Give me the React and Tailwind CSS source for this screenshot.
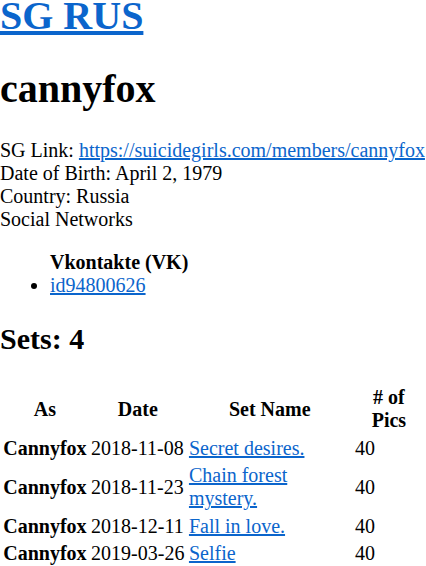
const sets = [
  { as: "Cannyfox", date: "2018-11-08", name: "Secret desires.", pics: 40 },
  { as: "Cannyfox", date: "2018-11-23", name: "Chain forest mystery.", pics: 40 },
  { as: "Cannyfox", date: "2018-12-11", name: "Fall in love.", pics: 40 },
  { as: "Cannyfox", date: "2019-03-26", name: "Selfie", pics: 40 },
];

const link = "text-[#0b65cc] underline";

export default function App() {
  return (
    <div className="bg-white text-black font-['Liberation_Serif','Times_New_Roman',serif] text-[20px] leading-[23px]">
      <h1 className="-mt-[7px] mb-[27px] text-[40px] leading-[46px] font-bold">
        <a href="#" className={link}>SG RUS</a>
      </h1>
      <h1 className="mb-[27px] text-[40px] leading-[46px] font-bold">cannyfox</h1>

      <div>
        SG Link:{" "}
        <a href="#" className={link}>https://suicidegirls.com/members/cannyfox</a>
      </div>
      <div>Date of Birth: April 2, 1979</div>
      <div>Country: Russia</div>
      <div>Social Networks</div>

      <ul className="my-[20px] pl-[50px]">
        <b className="block">Vkontakte (VK)</b>
        <li className="list-disc">
          <a href="#" className={link}>id94800626</a>
        </li>
      </ul>

      <h2 className="mt-[25px] mb-[27px] text-[30px] leading-[34px] font-bold">Sets: 4</h2>

      <table className="w-full border-separate border-spacing-[2.5px]">
        <thead>
          <tr>
            <th className="p-[1.25px] text-center font-bold">As</th>
            <th className="p-[1.25px] text-center font-bold">Date</th>
            <th className="p-[1.25px] text-center font-bold">Set Name</th>
            <th className="p-[1.25px] text-center font-bold"># of Pics</th>
          </tr>
        </thead>
        <tbody>
          {sets.map((s) => (
            <tr key={s.date}>
              <td className="p-[1.25px] font-bold">{s.as}</td>
              <td className="p-[1.25px] whitespace-nowrap">{s.date}</td>
              <td className="p-[1.25px]">
                <a href="#" className={link}>{s.name}</a>
              </td>
              <td className="p-[1.25px]">{s.pics}</td>
            </tr>
          ))}
        </tbody>
      </table>
    </div>
  );
}
